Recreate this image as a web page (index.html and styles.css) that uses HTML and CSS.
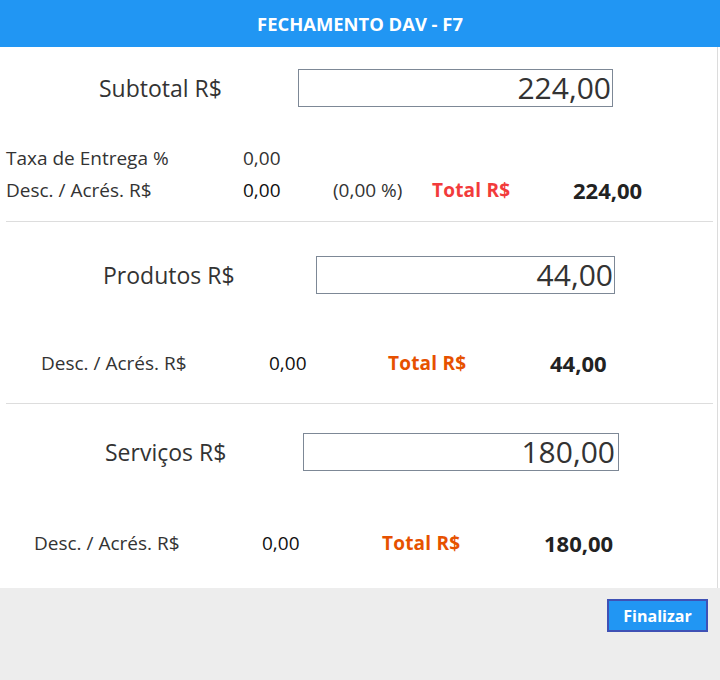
FILE: index.html
```html
<!DOCTYPE html>
<html lang="pt-BR">
<head>
<meta charset="utf-8">
<title>Fechamento DAV - F7</title>
<link rel="stylesheet" href="styles.css">
</head>
<body>
<header class="topbar">FECHAMENTO DAV - F7</header>
<main class="panel">
  <section class="block block-subtotal">
    <div class="field">
      <span class="field-label">Subtotal R$</span>
      <div class="field-box">224,00</div>
    </div>
    <div class="rows">
      <div class="row">
        <span class="lbl">Taxa de Entrega %</span>
        <span class="val">0,00</span>
      </div>
      <div class="row">
        <span class="lbl">Desc. / Acrés. R$</span>
        <span class="val val-strong">0,00</span>
        <span class="pct">(0,00 %)</span>
        <span class="tot-lbl tot-red">Total R$</span>
        <span class="tot-val">224,00</span>
      </div>
    </div>
  </section>
  <hr class="divider">
  <section class="block block-produtos">
    <div class="field">
      <span class="field-label">Produtos R$</span>
      <div class="field-box">44,00</div>
    </div>
    <div class="rows">
      <div class="row">
        <span class="lbl">Desc. / Acrés. R$</span>
        <span class="val val-strong">0,00</span>
        <span class="tot-lbl tot-orange">Total R$</span>
        <span class="tot-val">44,00</span>
      </div>
    </div>
  </section>
  <hr class="divider">
  <section class="block block-servicos">
    <div class="field">
      <span class="field-label">Serviços R$</span>
      <div class="field-box">180,00</div>
    </div>
    <div class="rows">
      <div class="row">
        <span class="lbl">Desc. / Acrés. R$</span>
        <span class="val val-strong">0,00</span>
        <span class="tot-lbl tot-orange">Total R$</span>
        <span class="tot-val">180,00</span>
      </div>
    </div>
  </section>
</main>
<footer class="footer">
  <button class="btn-finalizar" type="button">Finalizar</button>
</footer>
</body>
</html>
```

FILE: styles.css
```css
* { box-sizing: border-box; }

html, body {
  margin: 0;
  padding: 0;
  background: #ffffff;
  font-family: "Open Sans", "DejaVu Sans", sans-serif;
  color: #333333;
}

.topbar {
  height: 47px;
  background: #2196f3;
  color: #ffffff;
  font-weight: 700;
  font-size: 18.4px;
  line-height: 47px;
  text-align: center;
}

.panel {
  width: 718px;
  height: 541px;
  background: #ffffff;
  border-right: 1px solid #dcdcdc;
  display: flex;
  flex-direction: column;
}

.field {
  display: flex;
  align-items: center;
  height: 38px;
}

.field-label {
  font-size: 23px;
  line-height: 30px;
  color: #333333;
}

.field-box {
  height: 38px;
  border: 1px solid #7d8896;
  font-size: 30px;
  line-height: 36px;
  text-align: right;
  padding-right: 1px;
  color: #333333;
}

.row {
  display: grid;
  align-items: center;
  height: 32px;
  font-size: 19px;
  line-height: 32px;
}

.lbl { color: #333333; }
.val { color: #333333; }
.val-strong { color: #111111; }
.pct { color: #333333; }

.tot-lbl {
  font-weight: 700;
  font-size: 19px;
  letter-spacing: 0.2px;
}
.tot-red { color: #f23b3b; }
.tot-orange { color: #e65100; }

.tot-val {
  font-weight: 700;
  font-size: 22px;
  color: #222222;
}

.divider {
  border: 0;
  height: 1px;
  background: #dddddd;
  margin: 0 4px 0 6px;
  flex: none;
}

/* Subtotal block */
.block-subtotal { padding-top: 22px; padding-bottom: 15px; }
.block-subtotal .field-label { width: 199px; margin-left: 99px; }
.block-subtotal .field-box { width: 315px; }
.block-subtotal .rows { margin-top: 35px; }
.block-subtotal .row {
  padding-left: 6px;
  grid-template-columns: 237px 90px 99px 141px auto;
}

/* Produtos block */
.block-produtos { padding-top: 34px; padding-bottom: 24px; }
.block-produtos .field-label { width: 213px; margin-left: 103px; }
.block-produtos .field-box { width: 299px; }
.block-produtos .rows { margin-top: 53px; }
.block-produtos .row {
  padding-left: 41px;
  grid-template-columns: 228px 119px 162px auto;
}

/* Serviços block */
.block-servicos { padding-top: 29px; }
.block-servicos .field-label { width: 198px; margin-left: 105px; }
.block-servicos .field-box { width: 316px; padding-right: 3px; }
.block-servicos .rows { margin-top: 56px; }
.block-servicos .row {
  padding-left: 34px;
  grid-template-columns: 228px 120px 162px auto;
}

.footer {
  height: 92px;
  background: #ededed;
  display: flex;
  justify-content: flex-end;
  align-items: flex-start;
  padding: 11px 12px 0 0;
}

.btn-finalizar {
  width: 101px;
  height: 33px;
  background: #2196f3;
  border: 2px solid #3f51b5;
  color: #ffffff;
  font-family: "Open Sans", "DejaVu Sans", sans-serif;
  font-weight: 700;
  font-size: 16px;
  padding: 0;
  cursor: pointer;
}
```
